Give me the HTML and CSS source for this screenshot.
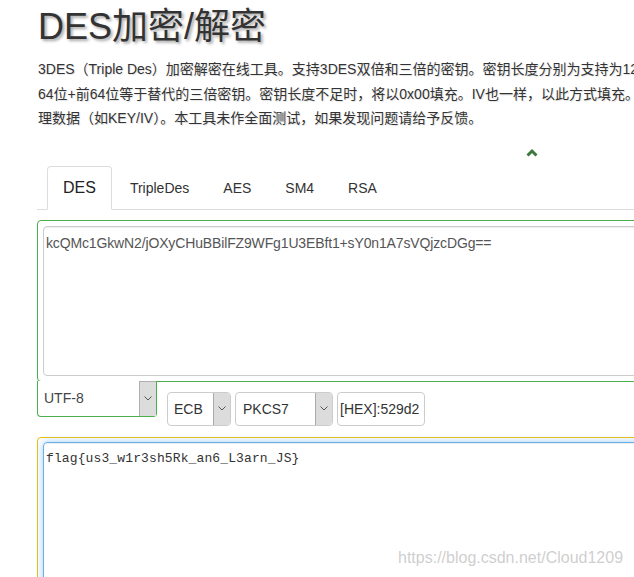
FILE: index.html
```html
<!DOCTYPE html>
<html lang="zh-CN">
<head>
<meta charset="utf-8">
<title>DES加密/解密</title>
<link rel="stylesheet" href="styles.css">
</head>
<body>
<div class="page">
  <h1 class="title">DES加密/解密</h1>
  <div class="intro">
    <p>3DES（Triple Des）加密解密在线工具。支持3DES双倍和三倍的密钥。密钥长度分别为支持为12</p>
    <p>64位+前64位等于替代的三倍密钥。密钥长度不足时，将以0x00填充。IV也一样，以此方式填充。</p>
    <p>理数据（如KEY/IV）。本工具未作全面测试，如果发现问题请给予反馈。</p>
  </div>
  <div class="toggle">
    <svg width="12" height="9" viewBox="0 0 12 9"><polyline points="1.5,7.5 6,3 10.5,7.5" fill="none" stroke="#3b7a3b" stroke-width="3"/></svg>
  </div>
  <ul class="tabs">
    <li class="tab active">DES</li>
    <li class="tab">TripleDes</li>
    <li class="tab">AES</li>
    <li class="tab">SM4</li>
    <li class="tab">RSA</li>
  </ul>
  <div class="input-box">
    <div class="ta">kcQMc1GkwN2/jOXyCHuBBilFZ9WFg1U3EBft1+sY0n1A7sVQjzcDGg==</div>
  </div>
  <div class="controls">
    <div class="charset">
      <span class="val">UTF-8</span>
      <span class="btn"><svg width="8" height="5" viewBox="0 0 8 5"><polyline points="0.5,0.5 4,4 7.5,0.5" fill="none" stroke="#555" stroke-width="1"/></svg></span>
    </div>
    <div class="opts">
      <div class="sel ecb"><span class="val">ECB</span><span class="btn"><svg width="8" height="5" viewBox="0 0 8 5"><polyline points="0.5,0.5 4,4 7.5,0.5" fill="none" stroke="#555" stroke-width="1"/></svg></span></div>
      <div class="sel pad"><span class="val">PKCS7</span><span class="btn"><svg width="8" height="5" viewBox="0 0 8 5"><polyline points="0.5,0.5 4,4 7.5,0.5" fill="none" stroke="#555" stroke-width="1"/></svg></span></div>
      <div class="sel key"><span class="val">[HEX]:529d2</span></div>
    </div>
  </div>
  <div class="output-box">
    <div class="ta focus">flag{us3_w1r3sh5Rk_an6_L3arn_JS}</div>
  </div>
  <div class="watermark">https://blog.csdn.net/Cloud1209</div>
</div>
</body>
</html>
```
FILE: styles.css
```css
html, body {
  margin: 0;
  padding: 0;
  background: #fff;
  overflow: hidden;
}
body {
  font-family: "Liberation Sans", Arial, "Noto Sans CJK SC", sans-serif;
  color: #333;
}
.page {
  position: relative;
  width: 1000px;
  height: 577px;
  padding-left: 37px;
  box-sizing: border-box;
}
.title {
  margin: 0;
  padding: 7px 0 0 1px;
  font-size: 36px;
  line-height: 40px;
  font-weight: normal;
  color: #333;
  text-shadow: 2px 2px 3px rgba(0, 0, 0, 0.35);
}
.intro {
  margin-top: 10px;
  padding-left: 1px;
  font-size: 14px;
  line-height: 24.5px;
  color: #333;
  text-shadow: 1px 1px 1px rgba(0, 0, 0, 0.12);
}
.intro p {
  margin: 0;
  white-space: nowrap;
}
.toggle {
  margin-top: 17px;
  height: 9px;
  margin-bottom: 9px;
  padding-left: 489px;
  line-height: 0;
}
.tabs {
  list-style: none;
  margin: 0;
  padding: 0 0 0 10px;
  display: flex;
  align-items: flex-start;
  height: 43px;
  border-bottom: 1px solid #ddd;
}
.tab {
  height: 44px;
  box-sizing: border-box;
  display: flex;
  align-items: center;
  padding: 0 15px;
  margin-right: 2px;
  border: 1px solid transparent;
  border-radius: 4px 4px 0 0;
  font-size: 14px;
  color: #333;
}
.tab.active {
  background: #fff;
  border-color: #ddd #ddd #fff;
  font-size: 16px;
  color: #222;
}
.input-box {
  margin-top: 10px;
  border: 1px solid #4cae4c;
  border-radius: 4px;
  padding: 5px;
}
.ta {
  box-sizing: border-box;
  height: 150px;
  border: 1px solid #ccc;
  border-radius: 4px;
  padding: 6px 2px;
  font-size: 14px;
  line-height: 20px;
  letter-spacing: -0.14px;
  color: #555;
  box-shadow: inset 0 1px 1px rgba(0, 0, 0, 0.075);
  white-space: nowrap;
}
.controls {
  display: flex;
  align-items: flex-start;
}
.charset {
  margin-top: -1px;
  width: 120px;
  height: 36px;
  box-sizing: border-box;
  background: #fff;
  border: 1px solid #4cae4c;
  border-top: none;
  border-radius: 0 0 4px 4px;
  display: flex;
  align-items: center;
  font-size: 14px;
  color: #444;
}
.val {
  padding-left: 6px;
  white-space: nowrap;
}
.btn {
  margin-left: auto;
  align-self: stretch;
  width: 16px;
  background: #dcdcdc;
  border-left: 1px solid #b0b0b0;
  border-top: 1px solid #b0b0b0;
  display: flex;
  align-items: center;
  justify-content: center;
}
.opts {
  display: flex;
  gap: 4px;
  margin-left: 10px;
  margin-top: 10px;
}
.sel {
  height: 34px;
  box-sizing: border-box;
  border: 1px solid #ccc;
  border-radius: 4px;
  display: flex;
  align-items: center;
  overflow: hidden;
  font-size: 14px;
  color: #333;
}
.sel .btn {
  border-top: none;
  border-left-color: #aaa;
}
.ecb { width: 64px; }
.pad { width: 98px; }
.pad .val { padding-left: 7px; }
.key { width: 88px; }
.key .val { padding-left: 2px; }
.output-box {
  margin-top: 11px;
  border: 1px solid #efbe0b;
  border-radius: 4px;
  padding: 4px 5px;
}
.ta.focus {
  height: 220px;
  border-color: #66afe9;
  box-shadow: inset 0 1px 1px rgba(0, 0, 0, 0.075), 0 0 8px rgba(102, 175, 233, 0.6);
  font-family: "Liberation Mono", "Courier New", monospace;
  font-size: 13px;
  letter-spacing: 0.12px;
  color: #333;
}
.watermark {
  position: absolute;
  left: 398px;
  top: 548px;
  font-size: 16px;
  line-height: 20px;
  color: rgba(190, 190, 190, 0.75);
  white-space: nowrap;
}
```
